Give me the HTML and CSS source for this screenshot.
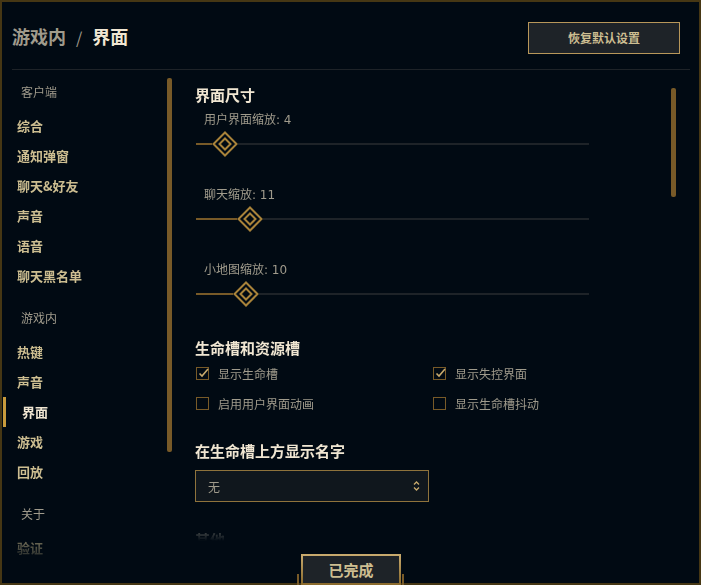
FILE: index.html
```html
<html>
<head>
<meta charset="utf-8">
<link rel="stylesheet" href="styles.css">
</head>
<body>
<div class="frame">
  <header class="header">
    <h1 class="title"><span>游戏内</span><span class="sep">/</span><span class="current">界面</span></h1>
    <button class="btn-reset">恢复默认设置</button>
  </header>

  <div class="body">
    <aside class="sidebar">
      <nav class="nav">
        <div class="group">
          <div class="group-label">客户端</div>
          <a class="nav-item">综合</a>
          <a class="nav-item">通知弹窗</a>
          <a class="nav-item">聊天&amp;好友</a>
          <a class="nav-item">声音</a>
          <a class="nav-item">语音</a>
          <a class="nav-item">聊天黑名单</a>
        </div>
        <div class="group">
          <div class="group-label">游戏内</div>
          <a class="nav-item">热键</a>
          <a class="nav-item">声音</a>
          <a class="nav-item active">界面</a>
          <a class="nav-item">游戏</a>
          <a class="nav-item">回放</a>
        </div>
        <div class="group">
          <div class="group-label">关于</div>
          <a class="nav-item">验证</a>
        </div>
      </nav>
      <div class="scroll-side"></div>
    </aside>

    <main class="content">
      <div class="panel">
        <section class="section sec-size">
          <h2 class="section-title">界面尺寸</h2>

          <div class="slider">
            <div class="slider-label">用户界面缩放: 4</div>
            <div class="track-row">
              <div class="fill" style="width:16px"></div>
              <svg class="knob" viewBox="0 0 26 26"><path d="M13 1.5L24.5 13L13 24.5L1.5 13Z" fill="#010a13" stroke="#a9833a" stroke-width="2"/><path d="M13 7.5L18.5 13L13 18.5L7.5 13Z" fill="none" stroke="#a9833a" stroke-width="2"/></svg>
              <div class="rest"></div>
            </div>
          </div>

          <div class="slider">
            <div class="slider-label">聊天缩放: 11</div>
            <div class="track-row">
              <div class="fill" style="width:41px"></div>
              <svg class="knob" viewBox="0 0 26 26"><path d="M13 1.5L24.5 13L13 24.5L1.5 13Z" fill="#010a13" stroke="#a9833a" stroke-width="2"/><path d="M13 7.5L18.5 13L13 18.5L7.5 13Z" fill="none" stroke="#a9833a" stroke-width="2"/></svg>
              <div class="rest"></div>
            </div>
          </div>

          <div class="slider">
            <div class="slider-label">小地图缩放: 10</div>
            <div class="track-row">
              <div class="fill" style="width:37px"></div>
              <svg class="knob" viewBox="0 0 26 26"><path d="M13 1.5L24.5 13L13 24.5L1.5 13Z" fill="#010a13" stroke="#a9833a" stroke-width="2"/><path d="M13 7.5L18.5 13L13 18.5L7.5 13Z" fill="none" stroke="#a9833a" stroke-width="2"/></svg>
              <div class="rest"></div>
            </div>
          </div>
        </section>

        <section class="section">
          <h2 class="section-title">生命槽和资源槽</h2>
          <div class="checks">
            <label class="check"><span class="box"><svg viewBox="0 0 13 12"><path d="M2.5 6.5L5 9L11 2" fill="none" stroke="#c8aa6e" stroke-width="1.6"/></svg></span>显示生命槽</label>
            <label class="check"><span class="box"><svg viewBox="0 0 13 12"><path d="M2.5 6.5L5 9L11 2" fill="none" stroke="#c8aa6e" stroke-width="1.6"/></svg></span>显示失控界面</label>
            <label class="check"><span class="box"></span>启用用户界面动画</label>
            <label class="check"><span class="box"></span>显示生命槽抖动</label>
          </div>
        </section>

        <section class="section">
          <h2 class="section-title">在生命槽上方显示名字</h2>
          <div class="select">
            <span>无</span>
            <svg class="updown" viewBox="0 0 7 12"><path d="M1 4.5L3.5 2L6 4.5M1 7.5L3.5 10L6 7.5" fill="none" stroke="#c8aa6e" stroke-width="1.3"/></svg>
          </div>
        </section>

        <section class="section">
          <h2 class="section-title">其他</h2>
        </section>
      </div>
      <div class="scroll-main"></div>
    </main>
  </div>

  <button class="btn-done">已完成</button>
</div>
</body>
</html>
```

FILE: styles.css
```css
html, body {
  margin: 0;
  overflow: hidden;
  background: #010a13;
  font-family: "DejaVu Sans", "Noto Sans CJK SC", sans-serif;
}

.frame {
  position: relative;
  width: 701px;
  height: 585px;
  box-sizing: border-box;
  border: 2px solid #463714;
  display: flex;
  flex-direction: column;
}

/* header */
.header {
  display: flex;
  align-items: center;
  justify-content: space-between;
  height: 67px;
  margin: 0 9px 0 10px;
  padding-right: 10px;
  border-bottom: 1px solid #1e2328;
}
.title {
  margin: 0;
  font-size: 18px;
  font-weight: 700;
  line-height: 1;
  color: #a09b8c;
  font-family: "Noto Sans CJK SC", sans-serif;
}
.sep {
  margin: 0 10px;
  font-weight: 400;
  font-size: 16px;
}
.current {
  color: #f0e6d2;
}
.btn-reset {
  width: 152px;
  height: 32px;
  margin-top: 4px;
  background: #1e2328;
  border: 1px solid #b8975a;
  color: #cdbe91;
  font-family: "Noto Sans CJK SC", sans-serif;
  font-weight: 700;
  font-size: 12px;
  padding: 0;
}

/* body */
.body {
  flex: 1;
  display: flex;
  min-height: 0;
}

.sidebar {
  width: 170px;
  display: flex;
}
.nav {
  flex: 1;
  padding: 9px 0 0 15px;
  -webkit-mask-image: linear-gradient(to bottom, #000 calc(100% - 62px), transparent calc(100% - 18px));
  mask-image: linear-gradient(to bottom, #000 calc(100% - 62px), transparent calc(100% - 18px));
}
.group + .group {
  margin-top: 14px;
}
.group-label {
  height: 26px;
  line-height: 26px;
  padding-left: 4px;
  margin-bottom: 6px;
  font-size: 12px;
  color: #a09b8c;
  font-family: "Noto Sans CJK SC", sans-serif;
}
.nav-item {
  position: relative;
  display: block;
  height: 30px;
  line-height: 30px;
  font-size: 13px;
  font-weight: 700;
  color: #cdbe91;
  font-family: "Noto Sans CJK SC", sans-serif;
}
.nav-item.active {
  color: #f0e6d2;
  padding-left: 5px;
}
.nav-item.active::before {
  content: "";
  position: absolute;
  left: -14px;
  top: 0;
  width: 3px;
  height: 30px;
  background: #c89b3c;
}
.scroll-side {
  width: 5px;
  height: 374px;
  margin-top: 8px;
  border-radius: 2px;
  background: #785a28;
}

/* content */
.content {
  flex: 1;
  display: flex;
}
.panel {
  flex: 1;
  padding: 15px 0 0 23px;
  -webkit-mask-image: linear-gradient(to bottom, #000 calc(100% - 76px), transparent calc(100% - 42px));
  mask-image: linear-gradient(to bottom, #000 calc(100% - 76px), transparent calc(100% - 42px));
}
.scroll-main {
  width: 5px;
  height: 109px;
  margin: 18px 23px 0 0;
  border-radius: 2px;
  background: #785a28;
}

.section {
  margin-bottom: 28px;
}
.sec-size {
  padding-bottom: 3px;
}
.section-title {
  margin: 0;
  font-size: 15px;
  line-height: 20px;
  font-weight: 700;
  color: #f0e6d2;
  font-family: "Noto Sans CJK SC", sans-serif;
}

.slider {
  margin-top: 30px;
}
.slider:first-of-type {
  margin-top: 7px;
}
.slider-label {
  padding-left: 9px;
  font-size: 12px;
  line-height: 16px;
  color: #a09b8c;
}
.track-row {
  display: flex;
  align-items: center;
  width: 393px;
  height: 26px;
  margin: 3px 0 0 1px;
}
.fill {
  height: 2px;
  background: #785a28;
}
.knob {
  width: 26px;
  height: 26px;
  flex: none;
}
.rest {
  flex: 1;
  height: 2px;
  background: #1e2328;
}

.checks {
  display: grid;
  grid-template-columns: 237px auto;
  row-gap: 10px;
  margin: 5px 0 0 1px;
}
.check {
  display: flex;
  align-items: center;
  height: 20px;
  font-size: 12px;
  color: #a09b8c;
  font-family: "Noto Sans CJK SC", sans-serif;
}
.box {
  position: relative;
  width: 13px;
  height: 13px;
  box-sizing: border-box;
  border: 1px solid #785a28;
  margin-right: 9px;
  flex: none;
}
.box svg {
  position: absolute;
  left: 0;
  top: -1px;
  width: 13px;
  height: 12px;
}

.select {
  display: flex;
  align-items: center;
  justify-content: space-between;
  width: 234px;
  height: 32px;
  margin-top: 9px;
  box-sizing: border-box;
  padding: 0 8px 0 12px;
  border: 1px solid #8f733c;
  background: #10171d;
  font-size: 12px;
  color: #a09b8c;
  font-family: "Noto Sans CJK SC", sans-serif;
}
.updown {
  width: 7px;
  height: 12px;
}

/* footer button */
.btn-done {
  position: absolute;
  left: 299px;
  bottom: -2px;
  width: 100px;
  height: 31px;
  box-sizing: border-box;
  padding: 0;
  border: 2px solid #c8aa6e;
  border-image: linear-gradient(to bottom, #c8aa6e, #8a6a2c) 1;
  background: #1e2328;
  color: #cdbe91;
  font-family: "Noto Sans CJK SC", sans-serif;
  font-weight: 700;
  font-size: 15px;
}
.btn-done::before,
.btn-done::after {
  content: "";
  position: absolute;
  bottom: -2px;
  width: 2px;
  height: 11px;
  background: #785a28;
}
.btn-done::before {
  left: -6px;
}
.btn-done::after {
  right: -5px;
}
```
